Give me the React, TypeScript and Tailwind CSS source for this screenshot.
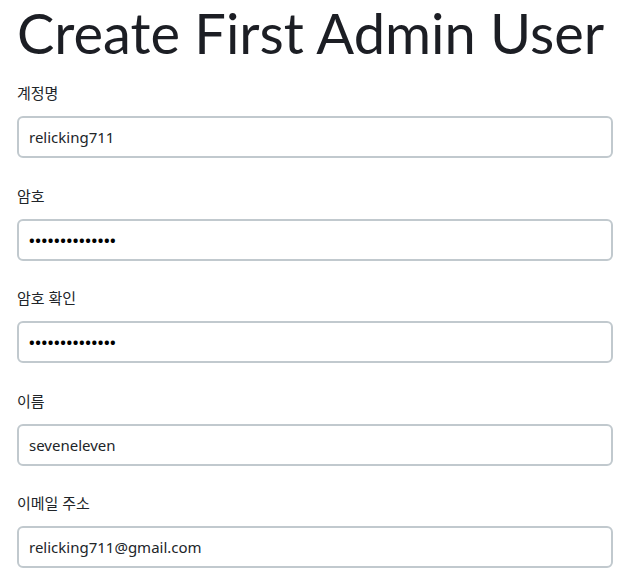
import React from 'react';

const fields = [
  { id: 'username', label: '계정명', type: 'text', value: 'relicking711' },
  { id: 'password', label: '암호', type: 'password', value: 'relicking7111!' },
  { id: 'confirm', label: '암호 확인', type: 'password', value: 'relicking7111!' },
  { id: 'name', label: '이름', type: 'text', value: 'seveneleven' },
  { id: 'email', label: '이메일 주소', type: 'email', value: 'relicking711@gmail.com' },
];

const App: React.FC = () => {
  return (
    <div className="min-h-[578px] bg-white px-[17px] text-[#212529] font-['Noto_Sans','Noto_Sans_CJK_KR',sans-serif]">
      <h1 className="whitespace-nowrap font-['Lato','Noto_Sans',sans-serif] text-[56px] leading-[66px] font-normal text-[#1c1e24] mb-[16px]">
        Create First Admin User
      </h1>

      <form className="flex flex-col">
        {fields.map((f) => (
          <div key={f.id} className="mb-[26.5px]">
            <label htmlFor={f.id} className="block text-[15px] leading-[22px] mb-[12px]">
              {f.label}
            </label>
            <input
              id={f.id}
              type={f.type}
              defaultValue={f.value}
              readOnly
              className={
                f.type === 'password'
                  ? 'block w-[596px] h-[42px] px-[10px] rounded-[6px] border-2 border-[#c1c9ce] bg-white text-[15px] font-bold tracking-[0.6px] text-black outline-none'
                  : 'block w-[596px] h-[42px] px-[10px] rounded-[6px] border-2 border-[#c1c9ce] bg-white text-[15px] text-[#212529] outline-none'
              }
            />
          </div>
        ))}
      </form>
    </div>
  );
};

export default App;
